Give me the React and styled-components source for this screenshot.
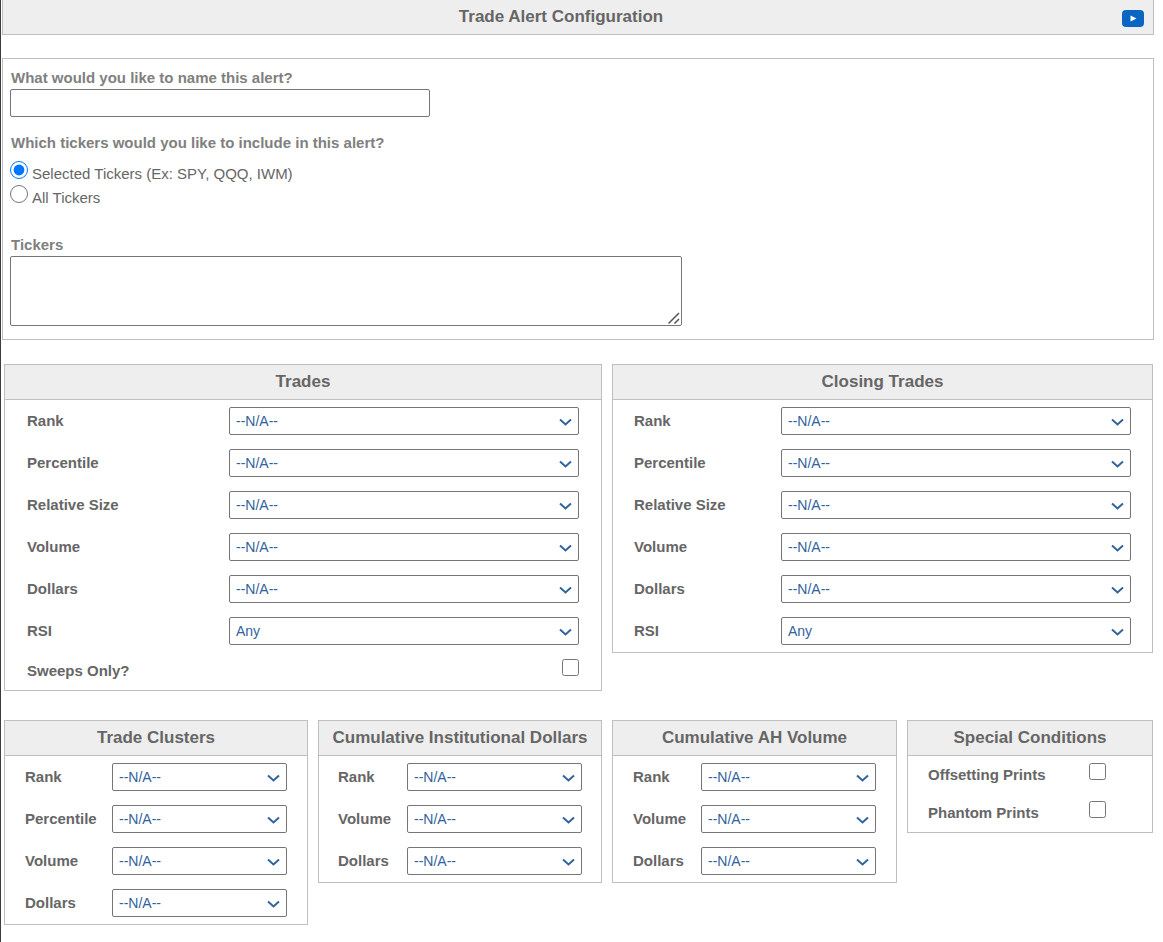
import React from 'react';
import styled, { createGlobalStyle } from 'styled-components';

const GlobalStyle = createGlobalStyle`
	* {
		box-sizing: border-box;
	}

	body {
		margin: 0;
		background: #fff;
		color: #666;
		font-family: 'Liberation Sans', Arial, sans-serif;
		font-size: 15px;
	}
`;

const Page = styled.main`
	border-left: 1px solid #3c3c3c;
	min-height: 100vh;
	padding: 0 9px 16px 1px;
`;

const PageHeader = styled.header`
	display: flex;
	align-items: center;
	gap: 3px;
	height: 35px;
	padding-right: 9px;
	background: #eee;
	border: 1px solid #bfbfbf;
	border-top: 0;
`;

const PageTitle = styled.h1`
	flex: 1;
	margin: 0;
	font-size: 17px;
	font-weight: bold;
	line-height: 34px;
	text-align: center;
`;

const VideoLink = styled.a`
	display: flex;
	padding-top: 2px;
`;

const AlertSection = styled.section`
	margin-top: 23px;
	padding: 8px 7px 13px;
	border: 1px solid #bfbfbf;
`;

const Field = styled.div`
	display: flex;
	flex-direction: column;
	margin-bottom: ${props => props.$gap};
`;

const FieldLabel = styled.label`
	padding-left: 1px;
	color: #808080;
	font-weight: bold;
	line-height: 22px;
`;

const TextInput = styled.input`
	width: 420px;
	max-width: 100%;
	height: 28px;
	border: 1px solid #767676;
	border-radius: 2px;
	font: inherit;
`;

const TextBoxWrap = styled.div`
	position: relative;
	width: 672px;
	max-width: 100%;
`;

const TextBox = styled.textarea`
	display: block;
	width: 100%;
	height: 70px;
	border: 1px solid #767676;
	border-radius: 2px;
	font: inherit;

	&::-webkit-resizer {
		background: transparent;
	}
`;

const ResizeGrip = styled.svg`
	position: absolute;
	right: 2px;
	bottom: 2px;
	pointer-events: none;
`;

const RadioGroup = styled.fieldset`
	margin: 0 0 25px;
	padding: 0;
	border: 0;
`;

const RadioLegend = styled.legend`
	margin-bottom: 7px;
	padding: 0 0 0 1px;
	color: #808080;
	font-weight: bold;
	line-height: 22px;
`;

const RadioOption = styled.label`
	display: flex;
	align-items: flex-start;
	gap: 4px;
	height: 24px;
	line-height: 26px;
`;

const Radio = styled.input`
	width: 18px;
	height: 18px;
	margin: 0;
`;

const PanelGrid = styled.div`
	display: grid;
	grid-template-columns:
		minmax(0, 304fr) minmax(0, 284fr)
		minmax(0, 285fr) minmax(0, 246fr);
	gap: 29px 10px;
	align-items: start;
	margin: 24px 1px 0 2px;
`;

const Panel = styled.section`
	grid-column: span ${props => (props.$wide ? 2 : 1)};
	border: 1px solid #bfbfbf;
`;

const PanelTitle = styled.h2`
	margin: 0;
	background: #eee;
	border-bottom: 1px solid #bfbfbf;
	font-size: 17px;
	font-weight: bold;
	line-height: 34px;
	text-align: center;
	white-space: nowrap;
`;

const PanelBody = styled.div`
	padding: 0 ${props => props.$side};
`;

const SelectRow = styled.div`
	display: flex;
	align-items: center;
	justify-content: space-between;
	height: 42px;
`;

const CheckRow = styled.div`
	display: flex;
	align-items: flex-start;
	justify-content: space-between;
	height: 38px;
	padding-top: 7px;
`;

const RowLabel = styled.label`
	font-weight: bold;
	line-height: 24px;
	white-space: nowrap;
`;

const SelectWrap = styled.div`
	position: relative;
	width: ${props => (props.$wide ? '350px' : '175px')};
`;

const Select = styled.select`
	display: block;
	width: 100%;
	height: 28px;
	padding: 0 24px 0 6px;
	appearance: none;
	background: #fff;
	border: 1px solid #767676;
	border-radius: 2px;
	color: #31639c;
	font-family: inherit;
	font-size: 14px;
`;

const Chevron = styled.svg`
	position: absolute;
	top: 11px;
	right: 7px;
	pointer-events: none;
`;

const Checkbox = styled.input`
	width: 17px;
	height: 17px;
	margin: 0;
`;

const VideoIcon = () => (
	<svg width="22" height="17" viewBox="0 0 22 17" aria-hidden="true">
		<rect width="22" height="17" rx="4" fill="#0b66c3" />
		<path d="M8.500 5.500L14.500 8.500L8.500 11.500Z" fill="#fff" />
	</svg>
);

const panels = [
	{
		id: 'trades',
		title: 'Trades',
		wide: true,
		side: '22px',
		rows: ['Rank', 'Percentile', 'Relative Size', 'Volume', 'Dollars', 'RSI'],
		check: 'Sweeps Only?',
	},
	{
		id: 'closing',
		title: 'Closing Trades',
		wide: true,
		side: '21px',
		rows: ['Rank', 'Percentile', 'Relative Size', 'Volume', 'Dollars', 'RSI'],
	},
	{
		id: 'clusters',
		title: 'Trade Clusters',
		side: '20px',
		rows: ['Rank', 'Percentile', 'Volume', 'Dollars'],
	},
	{
		id: 'institutional',
		title: 'Cumulative Institutional Dollars',
		side: '19px',
		rows: ['Rank', 'Volume', 'Dollars'],
	},
	{
		id: 'afterhours',
		title: 'Cumulative AH Volume',
		side: '20px',
		rows: ['Rank', 'Volume', 'Dollars'],
	},
];

const CheckOption = ({ id, label }) => (
	<CheckRow>
		<RowLabel htmlFor={id}>{label}</RowLabel>
		<Checkbox id={id} type="checkbox" />
	</CheckRow>
);

const SelectField = ({ id, wide, value }) => (
	<SelectWrap $wide={wide}>
		<Select id={id}>
			<option>{value}</option>
		</Select>
		<Chevron width="13" height="8" viewBox="0 0 13 8" aria-hidden="true">
			<path d="M1 1.500L6.500 6.500L12 1.500" fill="none" stroke="#31639c" strokeWidth="2" />
		</Chevron>
	</SelectWrap>
);

const FilterPanel = ({ id, title, wide, side, rows, check }) => (
	<Panel $wide={wide}>
		<PanelTitle>{title}</PanelTitle>
		<PanelBody $side={side}>
			{rows.map(row => (
				<SelectRow key={row}>
					<RowLabel htmlFor={`${id}-${row}`}>{row}</RowLabel>
					<SelectField
						id={`${id}-${row}`}
						wide={wide}
						value={row === 'RSI' ? 'Any' : '--N/A--'}
					/>
				</SelectRow>
			))}
			{check && <CheckOption id={`${id}-check`} label={check} />}
		</PanelBody>
	</Panel>
);

const App = () => {
	return (
		<>
			<GlobalStyle />
			<Page>
				<PageHeader>
					<PageTitle>Trade Alert Configuration</PageTitle>
					<VideoLink href="#video" aria-label="Watch video">
						<VideoIcon />
					</VideoLink>
				</PageHeader>
				<AlertSection>
					<Field $gap="15px">
						<FieldLabel htmlFor="alert-name">
							What would you like to name this alert?
						</FieldLabel>
						<TextInput id="alert-name" type="text" />
					</Field>
					<RadioGroup>
						<RadioLegend>
							Which tickers would you like to include in this alert?
						</RadioLegend>
						<RadioOption>
							<Radio type="radio" name="scope" defaultChecked />
							Selected Tickers (Ex: SPY, QQQ, IWM)
						</RadioOption>
						<RadioOption>
							<Radio type="radio" name="scope" />
							All Tickers
						</RadioOption>
					</RadioGroup>
					<Field $gap="0">
						<FieldLabel htmlFor="tickers">Tickers</FieldLabel>
						<TextBoxWrap>
							<TextBox id="tickers" />
							<ResizeGrip width="12" height="12" viewBox="0 0 12 12" aria-hidden="true">
								<path d="M.5 11.500L11 1M6.500 11.500L11 7" stroke="#555" strokeWidth="1.500" />
							</ResizeGrip>
						</TextBoxWrap>
					</Field>
				</AlertSection>
				<PanelGrid>
					{panels.map(panel => (
						<FilterPanel key={panel.id} {...panel} />
					))}
					<Panel>
						<PanelTitle>Special Conditions</PanelTitle>
						<PanelBody $side="46px 0 20px">
							<CheckOption id="offsetting" label="Offsetting Prints" />
							<CheckOption id="phantom" label="Phantom Prints" />
						</PanelBody>
					</Panel>
				</PanelGrid>
			</Page>
		</>
	);
};

export default App;
